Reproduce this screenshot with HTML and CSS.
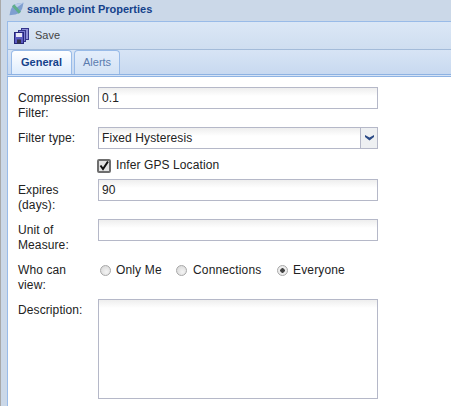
FILE: index.html
```html
<!DOCTYPE html>
<html>
<head>
<meta charset="utf-8">
<title>sample point Properties</title>
<link rel="stylesheet" href="styles.css">
</head>
<body>
<div class="window">
  <div class="edge"></div>
  <div class="main">
    <div class="title">
      <svg class="logo" width="19" height="16" viewBox="0 0 19 16"><g transform="rotate(-42 9.500 8)"><path d="M0 8 L5 4.500 L9.500 3 L14 4.500 L19 8 L14 11.500 L9.500 13 L5 11.500Z" fill="#7f9fd0"/><path d="M9.500 3 L14 4.500 L19 8 L9.500 7Z" fill="#b9cce9"/><rect x="8" y="3" width="3" height="10" fill="#5fae8a"/></g></svg>
      <span>sample point Properties</span>
    </div>
    <div class="toolbar">
      <svg class="save" width="16" height="16" viewBox="0 0 16 16"><rect x="7.500" y="0.500" width="7" height="11" fill="#8f8fd8" stroke="#34348a"/><rect x="4.500" y="2.500" width="7" height="11" fill="#7c7cd0" stroke="#34348a"/><rect x="0.500" y="4.500" width="9" height="11" fill="#5a5ac0" stroke="#26267a"/><rect x="2" y="5" width="6" height="4" fill="#e8e8f6"/><rect x="3" y="11.500" width="4" height="4" fill="#33334a"/></svg>
      <span>Save</span>
    </div>
    <div class="tabs">
      <div class="tab active">General</div>
      <div class="tab">Alerts</div>
    </div>
    <div class="form">
      <div class="row r1"><label>Compression Filter:</label><div class="input">0.1</div></div>
      <div class="row r2"><label>Filter type:</label><div class="input select"><span class="val">Fixed Hysteresis</span><span class="arrow"><svg width="9" height="6" viewBox="0 0 9 6"><path d="M0 0 L4.500 2.500 L9 0 V2 L4.500 5.500 L0 2Z" fill="#2b4a86"/></svg></span></div></div>
      <div class="check"><span class="box"><svg width="12" height="12" viewBox="0 0 12 12"><path d="M2.500 5.500 L5 9 L10 1.500" fill="none" stroke="#111" stroke-width="2"/></svg></span><span>Infer GPS Location</span></div>
      <div class="row r3"><label>Expires (days):</label><div class="input">90</div></div>
      <div class="row r4"><label>Unit of Measure:</label><div class="input"></div></div>
      <div class="row r5"><label>Who can view:</label>
        <div class="radios">
          <span class="opt o1"><i class="radio"></i>Only Me</span>
          <span class="opt o2"><i class="radio"></i>Connections</span>
          <span class="opt"><i class="radio on"></i>Everyone</span>
        </div>
      </div>
      <div class="row r6"><label>Description:</label><div class="input area"></div></div>
    </div>
  </div>
</div>
</body>
</html>
```
FILE: styles.css
```css
* { box-sizing: border-box; }
html, body { margin: 0; padding: 0; height: 100%; overflow: hidden; background: #fff; }
body { font: 12px/15px "Liberation Sans", Arial, sans-serif; color: #222; }
.window { display: flex; width: 451px; height: 406px; background: #cbd8e8; }
.edge { width: 7px; flex: none; background: #cbd8e8; border-left: 1px solid #a9a9a9; }
.main { flex: 1; min-width: 0; display: flex; flex-direction: column; }
.title { height: 21px; display: flex; align-items: center; gap: 1px; padding-bottom: 3px; font-weight: bold; color: #15428b; font-size: 11px; background: #cbd8e8; }
.logo { flex: none; }
.toolbar { height: 29px; display: flex; align-items: center; gap: 5px; padding-left: 6px; font-size: 11px; background: linear-gradient(#dbe7f6, #cfdef0); border-top: 1px solid #99bbe8; border-left: 1px solid #99bbe8; border-bottom: 1px solid #a3bbd9; color: #444; }
.tabs { height: 27px; display: flex; align-items: flex-end; gap: 2px; padding-left: 3px; font-size: 11px; background: linear-gradient(#d7e4f5, #c8d9f0); border-left: 1px solid #99bbe8; border-bottom: 3px double #8db2e3; }
.tab { height: 24px; padding: 0 8px; line-height: 22px; border: 1px solid #99bbe8; border-bottom: 0; border-radius: 4px 4px 0 0; background: linear-gradient(#e4eefb, #d3e2f5); color: #5b7cae; }
.tab.active { width: 61px; text-align: center; padding: 0; background: linear-gradient(#fff, #deecfd); color: #15428b; font-weight: bold; }
.form { flex: 1; background: #fff; border-left: 1px solid #99bbe8; padding: 10px 0 0 10px; display: flex; flex-direction: column; }
.row { display: flex; align-items: flex-start; }
label { width: 74px; margin-right: 6px; flex: none; line-height: 15px; padding-top: 4px; letter-spacing: 0.1px; }
.input { width: 280px; height: 22px; border: 1px solid #b5b8c8; background: linear-gradient(#eee, #fff 8px); line-height: 21px; padding-left: 3px; letter-spacing: 0.1px; }
.select { display: flex; padding-left: 0; }
.val { flex: 1; padding-left: 3px; }
.arrow { width: 17px; flex: none; display: flex; align-items: center; justify-content: center; background: #eef0f2; border-left: 1px solid #b5b8c8; }
.r1 { height: 40px; }
.r2 { height: 28px; }
.check { height: 24px; display: flex; align-items: center; gap: 5px; padding-left: 79px; padding-bottom: 3px; letter-spacing: 0.1px; }
.box { width: 14px; height: 14px; border: 2px solid #6e6e6e; border-radius: 2px; background: #e3e3e3; display: flex; align-items: center; justify-content: center; flex: none; }
.box svg { flex: none; }
.r3 { height: 40px; }
.r4 { height: 40px; }
.r5 { height: 40px; }
.radios { display: flex; padding-top: 4px; letter-spacing: 0.15px; }
.opt { display: inline-flex; align-items: center; gap: 5px; height: 15px; }
.o1 { width: 76px; }
.o2 { width: 101px; gap: 6px; }
.radio { width: 11px; height: 11px; border-radius: 50%; border: 1px solid #a8a8a8; background: radial-gradient(circle at 60% 65%, #f4f4f4, #d4d4d4); display: block; flex: none; margin-left: 2px; }
.radio.on { background: radial-gradient(circle, #444 0 2px, #ececec 2.500px); }
.area { height: 100px; }
```
